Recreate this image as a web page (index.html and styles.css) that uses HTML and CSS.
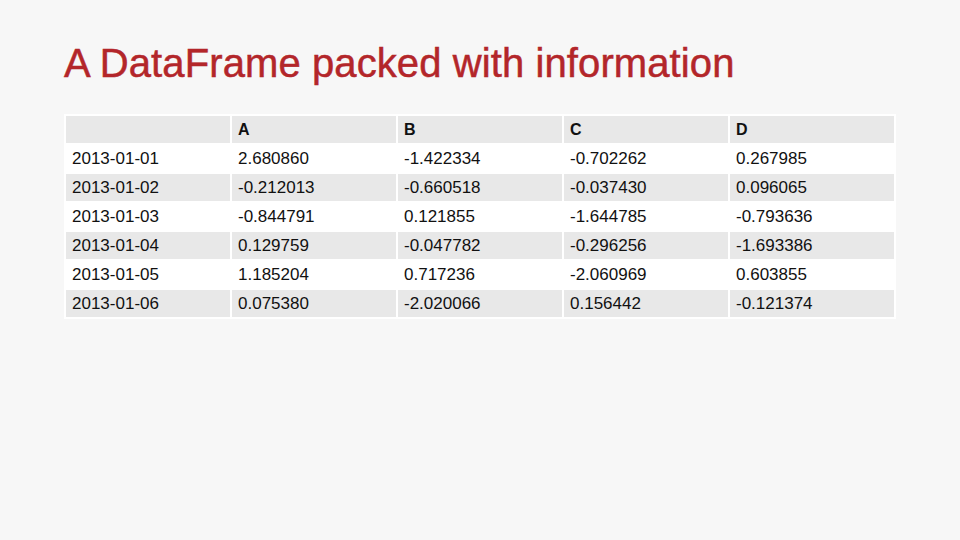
FILE: index.html
```html
<!DOCTYPE html>
<html lang="en">
<head>
<meta charset="utf-8">
<title>A DataFrame packed with information</title>
<link rel="stylesheet" href="styles.css">
</head>
<body>
<main class="slide">
  <h1 class="title">A DataFrame packed with information</h1>
  <table class="df">
    <thead>
      <tr><th></th><th>A</th><th>B</th><th>C</th><th>D</th></tr>
    </thead>
    <tbody>
      <tr><td>2013-01-01</td><td>2.680860</td><td>-1.422334</td><td>-0.702262</td><td>0.267985</td></tr>
      <tr><td>2013-01-02</td><td>-0.212013</td><td>-0.660518</td><td>-0.037430</td><td>0.096065</td></tr>
      <tr><td>2013-01-03</td><td>-0.844791</td><td>0.121855</td><td>-1.644785</td><td>-0.793636</td></tr>
      <tr><td>2013-01-04</td><td>0.129759</td><td>-0.047782</td><td>-0.296256</td><td>-1.693386</td></tr>
      <tr><td>2013-01-05</td><td>1.185204</td><td>0.717236</td><td>-2.060969</td><td>0.603855</td></tr>
      <tr><td>2013-01-06</td><td>0.075380</td><td>-2.020066</td><td>0.156442</td><td>-0.121374</td></tr>
    </tbody>
  </table>
</main>
</body>
</html>
```

FILE: styles.css
```css
html, body {
  margin: 0;
  padding: 0;
  background: #f7f7f7;
}
.slide {
  width: 960px;
  height: 540px;
  box-sizing: border-box;
  padding: 43px 64px 0;
  font-family: "Liberation Sans", Arial, sans-serif;
}
.title {
  margin: 0;
  font-size: 40px;
  line-height: 40px;
  font-weight: normal;
  letter-spacing: 0.1px;
  color: #b3262a;
  -webkit-text-stroke: 0.5px #b3262a;
}
.df {
  margin-top: 31px;
  width: 832px;
  table-layout: fixed;
  border-collapse: separate;
  border-spacing: 2px;
  background: #ffffff;
  color: #111111;
  font-size: 17px;
}
.df th, .df td {
  height: 27px;
  padding: 0 6px;
  text-align: left;
  vertical-align: middle;
  box-sizing: border-box;
}
.df th {
  font-weight: bold;
  font-size: 16px;
  background: #e8e8e8;
}
.df tbody tr:nth-child(even) td {
  background: #e8e8e8;
}
.df tbody tr:nth-child(odd) td {
  background: #ffffff;
}
```
